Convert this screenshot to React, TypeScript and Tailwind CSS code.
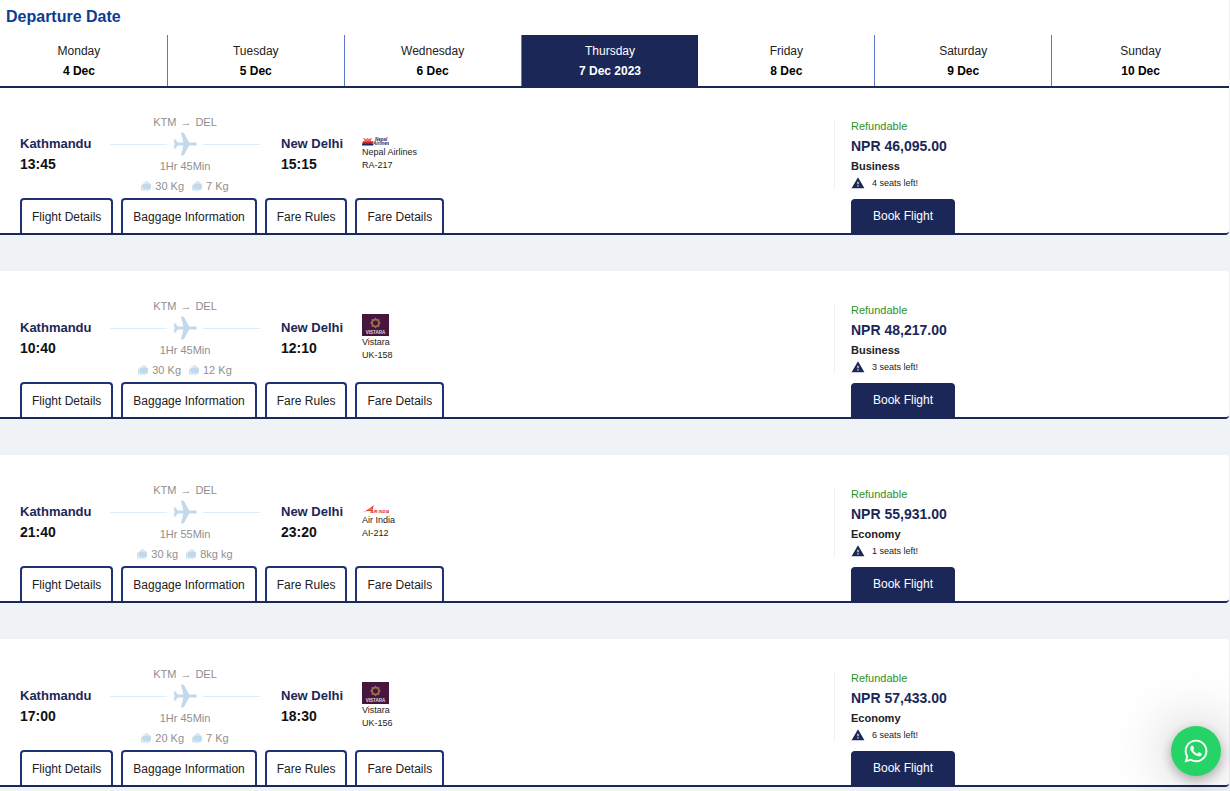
import { FaWhatsapp } from "react-icons/fa";
import { MdWarning } from "react-icons/md";

type Airline = "nepal" | "vistara" | "airindia";

interface Flight {
  depart: string;
  arrive: string;
  duration: string;
  checked: string;
  cabin: string;
  logo: Airline;
  airline: string;
  code: string;
  price: string;
  travelClass: string;
  seats: number;
}

const DAYS = [
  { day: "Monday", date: "4 Dec" },
  { day: "Tuesday", date: "5 Dec" },
  { day: "Wednesday", date: "6 Dec" },
  { day: "Thursday", date: "7 Dec 2023", active: true },
  { day: "Friday", date: "8 Dec" },
  { day: "Saturday", date: "9 Dec" },
  { day: "Sunday", date: "10 Dec" },
];

const FLIGHTS: Flight[] = [
  { depart: "13:45", arrive: "15:15", duration: "1Hr 45Min", checked: "30 Kg", cabin: "7 Kg", logo: "nepal", airline: "Nepal Airlines", code: "RA-217", price: "NPR 46,095.00", travelClass: "Business", seats: 4 },
  { depart: "10:40", arrive: "12:10", duration: "1Hr 45Min", checked: "30 Kg", cabin: "12 Kg", logo: "vistara", airline: "Vistara", code: "UK-158", price: "NPR 48,217.00", travelClass: "Business", seats: 3 },
  { depart: "21:40", arrive: "23:20", duration: "1Hr 55Min", checked: "30 kg", cabin: "8kg kg", logo: "airindia", airline: "Air India", code: "AI-212", price: "NPR 55,931.00", travelClass: "Economy", seats: 1 },
  { depart: "17:00", arrive: "18:30", duration: "1Hr 45Min", checked: "20 Kg", cabin: "7 Kg", logo: "vistara", airline: "Vistara", code: "UK-156", price: "NPR 57,433.00", travelClass: "Economy", seats: 6 },
];

const TABS = ["Flight Details", "Baggage Information", "Fare Rules", "Fare Details"];

function PlaneIcon() {
  return (
    <svg viewBox="0 0 24 24" className="size-6" fill="#c0d9ec" aria-hidden="true">
      <path d="M22.300 10.500H16L11.300 1.600Q10.800.6 9.800.6H8l2.400 9.900H4.600L2.400 7.400H.4L1.700 12 .4 16.600h2l2.200-3.100h5.800L8 23.400h1.800q1 0 1.500-1L16 13.500h6.300a1.500 1.500 0 0 0 0-3z" />
    </svg>
  );
}

function BagIcon() {
  return (
    <svg viewBox="0 0 10 10" className="size-[10px]" fill="#c0d9ec" aria-hidden="true">
      <path d="M3.700 2.500V1.300Q3.700.6 4.400.6h2.500q.7 0 .7.7v1.200h1.500q.8 0 .8.8v4.300q0 .8-.8.8H2.300q-.8 0-.8-.8V3.300q0-.8.8-.8zm.9 0h2.100v-1H4.600z" />
      <path d="M.2 4h1v4.700h7.300v.9H1q-.8 0-.8-.8z" />
    </svg>
  );
}

function AirlineLogo({ name }: { name: Airline }) {
  if (name === "vistara") {
    return (
      <svg viewBox="0 0 27 22" className="h-[22px] w-[27px]" aria-hidden="true">
        <rect width="27" height="22" fill="#46163f" />
        <g fill="none" stroke="#9c6b50" strokeWidth="1.300">
          <rect x="10.300" y="5.800" width="6.400" height="6.400" />
          <rect x="10.300" y="5.800" width="6.400" height="6.400" transform="rotate(45 13.500 9)" />
        </g>
        <text x="13.500" y="19.500" textAnchor="middle" fontSize="4.500" fontWeight="700" fill="#e3d5df">
          VISTARA
        </text>
      </svg>
    );
  }
  if (name === "airindia") {
    return (
      <svg viewBox="0 0 27 9" className="h-[9px] w-[27px]" aria-hidden="true">
        <path d="M0 7.500Q5.500 5.500 12 0 10.500 3 10.500 6.300 5 5.500 0 7.500z" fill="#e0301e" />
        <path d="M5 5.500l5-3.300-.2 3.400z" fill="#ef7a1a" />
        <text x="8.500" y="8.300" fontSize="4" fontWeight="700" fontStyle="italic" fill="#d8232a">
          AIR INDIA
        </text>
      </svg>
    );
  }
  return (
    <svg viewBox="0 0 27 9" className="h-[9px] w-[27px]" aria-hidden="true">
      <path d="M1 .8l3 1.400L5.500 1l1.500 1.200L10 .8 8.500 4.300H3z" fill="#d9605a" />
      <path d="M4.500 1.500h2v2h-2z" fill="#e8a13a" />
      <path d="M1 4.300h10.500L11 6.500H.3z" fill="#d3202f" />
      <path d="M.3 6.300H10l1 .8v1.400H0z" fill="#1d2460" />
      <g fontSize="4.500" fontWeight="700" fontStyle="italic" fill="#1d2460">
        <text x="13" y="4">Nepal</text>
        <text x="11" y="8">Airlines</text>
      </g>
    </svg>
  );
}

function Endpoint({ city, time }: { city: string; time: string }) {
  return (
    <div className="leading-5 font-bold whitespace-nowrap">
      <div className="text-[13px] text-[#1b2757]">{city}</div>
      <div className="text-[14px] text-[#111]">{time}</div>
    </div>
  );
}

function Route({ flight }: { flight: Flight }) {
  return (
    <div className="flex flex-col items-center text-[11px] leading-[18px] text-[#8f8f8f]">
      <div className="flex gap-1">
        <span>KTM</span>
        <span>→</span>
        <span>DEL</span>
      </div>
      <div className="my-px flex h-6 w-full items-center justify-between">
        <span className="h-px w-[57px] bg-[#dbeefc]" />
        <PlaneIcon />
        <span className="h-px w-[57px] bg-[#dbeefc]" />
      </div>
      <div>{flight.duration}</div>
      <div className="mt-0.5 flex items-center gap-2">
        <span className="flex items-center gap-1">
          <BagIcon />
          {flight.checked}
        </span>
        <span className="flex items-center gap-1">
          <BagIcon />
          {flight.cabin}
        </span>
      </div>
    </div>
  );
}

function FlightCard({ flight }: { flight: Flight }) {
  return (
    <article className="grid grid-cols-[834fr_395fr] rounded-r border-b-2 border-[#1b2757] bg-white">
      <div className="flex flex-col justify-between pl-5">
        <div className="grid grid-cols-[69px_150px_60px_auto] items-center justify-start gap-x-[21px] pt-[26px] pb-[3px]">
          <Endpoint city="Kathmandu" time={flight.depart} />
          <Route flight={flight} />
          <Endpoint city="New Delhi" time={flight.arrive} />
          <div className="flex flex-col text-[9px] leading-[13px] text-[#222]">
            <AirlineLogo name={flight.logo} />
            <span>{flight.airline}</span>
            <span>{flight.code}</span>
          </div>
        </div>
        <div className="flex gap-2">
          {TABS.map((tab) => (
            <button
              key={tab}
              type="button"
              className="h-[35px] rounded-t border-2 border-b-0 border-[#1f3278] px-2.5 text-[12px] whitespace-nowrap text-[#222]"
            >
              {tab}
            </button>
          ))}
        </div>
      </div>
      <div className="flex flex-col items-start justify-between pt-[33px]">
        <div className="border-l border-[#f0f0f0] pl-4">
          <div className="text-[11px] leading-3 text-[#2b8f2b]">Refundable</div>
          <div className="text-[14px] leading-7 font-bold text-[#1b2757]">{flight.price}</div>
          <div className="text-[11px] leading-3 font-bold text-[#222]">{flight.travelClass}</div>
          <div className="mt-1 flex items-center gap-[7px] text-[9px] leading-[14px] text-[#222]">
            <MdWarning className="size-[14px] text-[#1b2757]" />
            {flight.seats} seats left!
          </div>
        </div>
        <button type="button" className="ml-[17px] h-[34px] w-[104px] rounded-t bg-[#1b2757] text-[12px] text-white">
          Book Flight
        </button>
      </div>
    </article>
  );
}

export default function App() {
  return (
    <div className="min-h-screen overflow-x-hidden bg-[#eff3f6] pr-px font-['Liberation_Sans',Arial,sans-serif]">
      <header className="relative z-10 bg-white pt-[5px]">
        <h1 className="pl-1.5 text-[16px] leading-6 font-bold text-[#0a3d91]">Departure Date</h1>
        <nav className="mt-1.5 -ml-[9px] grid grid-cols-7 border-b-2 border-[#1b2757]">
          {DAYS.map(({ day, date, active }) => (
            <button
              key={day}
              type="button"
              className={
                active
                  ? "flex flex-col items-center bg-[#1b2757] pt-1.5 pb-[5px] text-[12px] leading-5 text-white"
                  : "flex flex-col items-center border-r border-[#5b78c8] pt-1.5 pb-[5px] text-[12px] leading-5 text-[#222] last:border-r-0"
              }
            >
              <span>{day}</span>
              <span className={active ? "font-bold" : "font-bold text-black"}>{date}</span>
            </button>
          ))}
        </nav>
      </header>
      <main className="-mt-px flex flex-col gap-9">
        {FLIGHTS.map((flight) => (
          <FlightCard key={flight.code} flight={flight} />
        ))}
      </main>
      <a
        href="#whatsapp"
        aria-label="WhatsApp"
        className="fixed right-[9px] bottom-[15px] z-20 flex size-[50px] items-center justify-center rounded-full bg-[#25d366] text-white shadow-[0_4px_12px_rgba(0,0,0,0.3),0_0_60px_rgba(0,0,0,0.3)]"
      >
        <FaWhatsapp className="size-[26px]" />
      </a>
    </div>
  );
}
